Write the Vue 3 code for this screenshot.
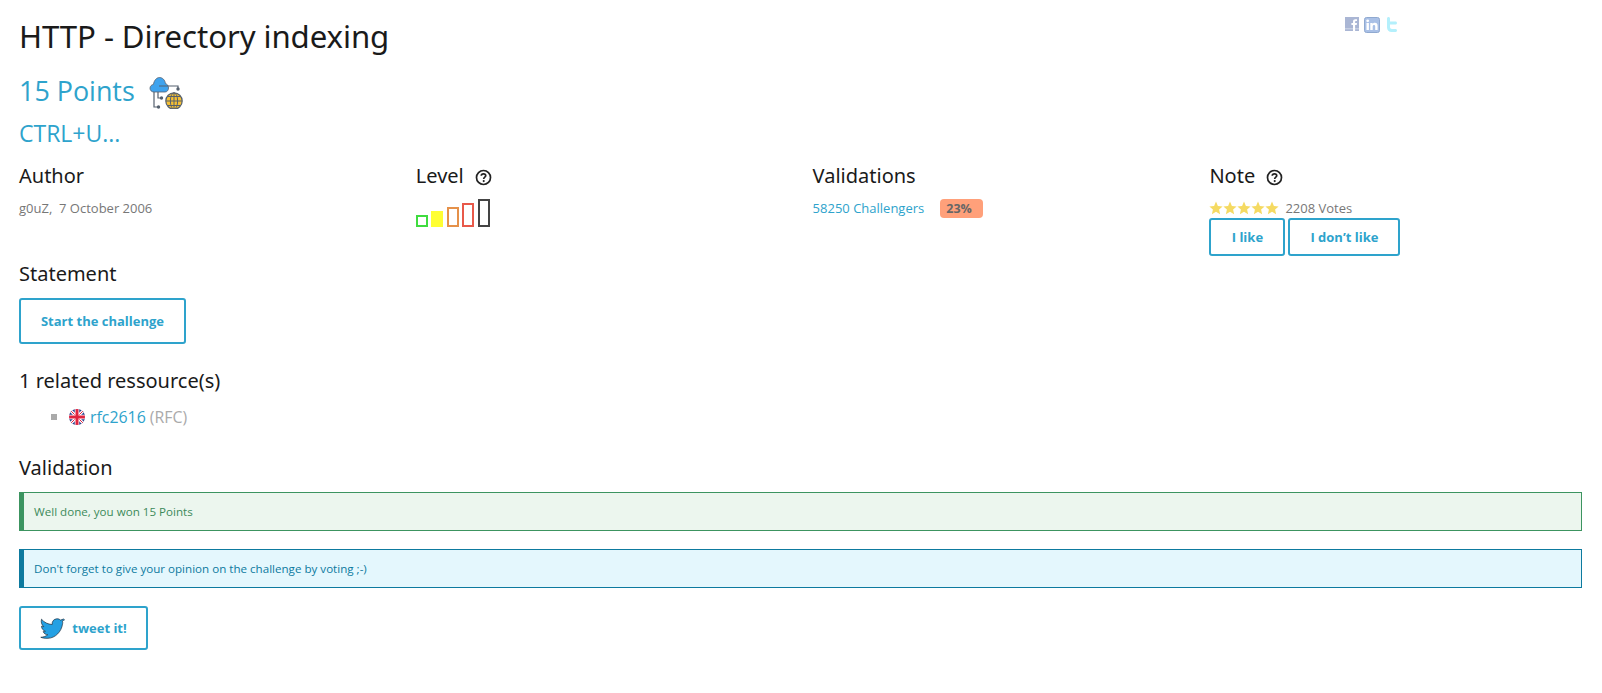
<script setup>
const columns = ['Author', 'Level', 'Validations', 'Note']
const bars = [
  { h: 12, c: '#3fdc3f', fill: false },
  { h: 16, c: '#ffff33', fill: true },
  { h: 20, c: '#e5914a', fill: false },
  { h: 24, c: '#e8594a', fill: false },
  { h: 28, c: '#444444', fill: false },
]
const stars = [1, 2, 3, 4, 5]
</script>

<template>
  <main class="page">
    <div class="share">
      <svg width="14" height="14" viewBox="0 0 14 14"><rect width="14" height="14" fill="#aab6d4"/><rect y="11" width="14" height="1.4" fill="#c6cfe3"/><path d="M8 14V8H6.4V6H8V4.6C8 3 9 2.2 10.4 2.2H12V4H10.9C10.3 4 10.1 4.3 10.1 4.8V6H12L11.7 8H10.1V14Z" fill="#fff"/></svg>
      <svg width="16" height="16" viewBox="0 0 16 16"><rect x=".5" y=".5" width="15" height="15" rx="2" fill="#a9c0e6" stroke="#8fa9d0"/><rect x="2.5" y="6" width="2.4" height="7" fill="#fff"/><circle cx="3.7" cy="3.8" r="1.4" fill="#fff"/><path d="M6.3 6H8.6V7C9.1 6.3 9.9 5.8 10.9 5.8C12.8 5.8 13.6 7 13.6 9V13H11.2V9.4C11.2 8.4 10.8 7.9 10 7.9C9.2 7.9 8.7 8.5 8.7 9.4V13H6.3Z" fill="#fff"/></svg>
      <svg width="14" height="16" viewBox="0 0 14 16"><path d="M2 1.5C2 .7 2.7 0 3.5 0S5 .7 5 1.5V4.5H10.5C11.4 4.5 12 5.2 12 6S11.4 7.5 10.5 7.5H5V10C5 11.2 5.8 12 7 12H10.5C11.4 12 12 12.7 12 13.5S11.4 15 10.5 15H6.5C3.9 15 2 13.1 2 10.5Z" fill="#b4f0fc"/></svg>
    </div>

    <h1>HTTP - Directory indexing</h1>
    <div class="points">
      <span>15 Points</span>
      <svg class="cat" width="34" height="34" viewBox="0 0 34 34">
        <g fill="none" stroke="#55606e" stroke-width="1.2">
          <path d="M5 16V32H9"/><path d="M9 16V23H12"/><path d="M18 11H29V14"/>
        </g>
        <g fill="#55606e"><circle cx="9.5" cy="32" r="1.7"/><circle cx="12.5" cy="23" r="1.7"/><circle cx="29" cy="14" r="1.7"/></g>
        <path d="M5 17C2.5 17 1 15.2 1 13.2C1 11.2 2.5 9.6 4.5 9.4C5 5.5 7.5 2.5 10.5 2.5C13.5 2.5 16 5 16.5 8.7C18.3 9 19.5 10.700 19.5 13C19.5 15.300 18 17 16 17Z" fill="#3fa3ee" stroke="#55606e" stroke-width=".8"/>
        <path d="M10 11H19" stroke="#55606e" stroke-width="1"/>
        <circle cx="25" cy="26" r="8.2" fill="#f6c033" stroke="#55606e" stroke-width="1.2"/>
        <g fill="none" stroke="#55606e" stroke-width="1"><ellipse cx="25" cy="26" rx="3.6" ry="8.2"/><path d="M17 26H33M25 18V34M18.500 21.500H31.500M18.500 30.500H31.500"/></g>
      </svg>
    </div>
    <h2 class="desc">CTRL+U...</h2>

    <section class="grid">
      <div v-for="name in columns" :key="name" class="col">
        <h3>
          {{ name }}
          <svg v-if="name === 'Level' || name === 'Note'" class="help" width="17" height="17" viewBox="0 0 16 16">
            <circle cx="8" cy="8" r="6.6" fill="none" stroke="#222" stroke-width="1.6"/>
            <path d="M5.9 6.4C5.9 5.2 6.8 4.5 8 4.5C9.2 4.5 10.1 5.2 10.1 6.3C10.1 7.7 8.2 7.7 8.2 9.3" fill="none" stroke="#222" stroke-width="1.6"/>
            <circle cx="8.2" cy="11.4" r="1" fill="#222"/>
          </svg>
        </h3>
        <p v-if="name === 'Author'" class="small grey">g0uZ,&nbsp; 7 October 2006</p>
        <div v-else-if="name === 'Level'" class="bars">
          <span v-for="b in bars" :key="b.h" class="bar" :style="{ height: b.h + 'px', borderColor: b.c, background: b.fill ? b.c : 'transparent' }"></span>
        </div>
        <p v-else-if="name === 'Validations'" class="small link-row">
          <a>58250 Challengers</a><span class="badge">23%</span>
        </p>
        <template v-else>
          <p class="small grey votes">
            <span class="stars">
              <svg v-for="s in stars" :key="s" width="14" height="14" viewBox="0 0 14 14"><path d="M7 .6L8.9 4.9L13.6 5.400L10.100 8.500L11.100 13.200L7 10.800L2.900 13.200L3.900 8.500L.4 5.400L5.100 4.900Z" fill="#f5da62"/></svg>
            </span>2208 Votes
          </p>
          <div class="votebtns">
            <button class="btn vote like">I like</button>
            <button class="btn vote dislike">I don’t like</button>
          </div>
        </template>
      </div>
    </section>

    <h3 class="statement">Statement</h3>
    <button class="btn start">Start the challenge</button>

    <h3 class="related">1 related ressource(s)</h3>
    <ul>
      <li>
        <svg class="flag" width="16" height="16" viewBox="0 0 16 16">
          <defs><clipPath id="round"><circle cx="8" cy="8" r="8"/></clipPath></defs>
          <g clip-path="url(#round)">
            <rect width="16" height="16" fill="#2c3f8c"/>
            <path d="M0 0L16 16M16 0L0 16" stroke="#fff" stroke-width="3"/>
            <path d="M0 0L16 16M16 0L0 16" stroke="#e0233e" stroke-width="1"/>
            <path d="M8 0V16M0 8H16" stroke="#fff" stroke-width="4.5"/>
            <path d="M8 0V16M0 8H16" stroke="#e0233e" stroke-width="3"/>
          </g>
        </svg>
        <a>rfc2616</a> <span class="rfc">(RFC)</span>
      </li>
    </ul>

    <h3 class="validation">Validation</h3>
    <div class="alert success">Well done, you won 15 Points</div>
    <div class="alert info">Don't forget to give your opinion on the challenge by voting ;-)</div>
    <button class="btn tweet">
      <svg width="25" height="21" viewBox="0 0 25 21">
        <path d="M24.5 1.8C23.8 2.3 23 2.8 22.2 3.1C22.9 4 22.8 5 22.5 6.1C21.5 13.5 15.5 20 8 20.3C5 20.5 2.5 20 .8 19.3C3.5 19.1 6 18.3 7.8 16.7C5.5 16.6 4 15.7 3.2 13.6C4 13.7 4.8 13.6 5.4 13.3C3 12.4 1.6 10.6 1.5 8.2C2.2 8.5 3 8.7 3.8 8.7C1.5 6.7 .8 4 1.5 1.2C4.2 4.4 7.8 6.3 12.2 6.5C11.8 3.5 13.8 1 16.8 .8C18.2 .7 19.5 1.2 20.5 2.1C21.5 1.8 22.5 1.5 23.4 1Z" fill="#24a0e3" stroke="#1c2b3a" stroke-width=".7"/>
      </svg>
      <span>tweet it!</span>
    </button>
  </main>
</template>

<style scoped>
.page {
  position: relative;
  padding: 18px 19px 0;
  font-family: "Open Sans", "Noto Sans", sans-serif;
  color: #777;
}
.share {
  position: absolute;
  left: 1345px;
  top: 17px;
  display: flex;
  align-items: flex-start;
  gap: 5px;
}
h1, h3 {
  font-family: "Noto Sans", "Open Sans", sans-serif;
  font-weight: 400;
  color: #1a1a1a;
  margin: 0;
}
h1 {
  font-size: 31.2px;
  line-height: 37px;
  letter-spacing: -0.1px;
}
.points {
  margin-top: 18px;
  display: flex;
  align-items: center;
  gap: 14px;
  color: #2ea3cc;
  font-size: 26.9px;
  height: 34px;
}
.cat { margin-top: 4px; }
.desc {
  margin: 10px 0 0;
  font-size: 23px;
  font-weight: 400;
  line-height: 32px;
  color: #2ea3cc;
}
.grid {
  margin-top: 13px;
  display: grid;
  grid-template-columns: repeat(4, 396.8px);
  height: 98px;
}
h3 {
  font-size: 20px;
  line-height: 28px;
}
.help {
  margin-left: 6px;
  vertical-align: -3px;
}
.small {
  font-size: 13px;
  line-height: 18px;
  margin: 0;
}
.grey { color: #777; }
.col > .small { margin-top: 9px; }
.bars {
  display: flex;
  align-items: flex-end;
  gap: 3.5px;
  margin-top: 7px;
  height: 30px;
}
.bar {
  width: 12px;
  box-sizing: border-box;
  border: 2.4px solid;
  display: block;
}
.link-row a { color: #2ea3cc; }
.badge {
  display: inline-block;
  margin-left: 16px;
  padding-left: 6px;
  width: 43px;
  box-sizing: border-box;
  height: 19px;
  line-height: 19px;
  background: #ffa07a;
  border-radius: 4px;
  color: #666;
  font-weight: 700;
  font-size: 12.5px;
}
.col > .votes {
  margin-top: 9px;
  display: flex;
  align-items: center;
  height: 18px;
}
.stars {
  display: flex;
  width: 70px;
  margin-right: 6px;
}
.votebtns {
  display: flex;
  gap: 3px;
  margin-top: 1px;
}
.btn {
  font-family: "Open Sans", "Noto Sans", sans-serif;
  font-weight: 700;
  font-size: 13px;
  color: #2ea3cc;
  background: #fff;
  border: 2px solid #2ea3cc;
  border-radius: 3px;
  padding: 0;
  box-sizing: border-box;
  display: flex;
  align-items: center;
  justify-content: center;
}
.vote { height: 38px; }
.like { width: 76px; }
.dislike { width: 112px; }
.start {
  margin-top: 10px;
  width: 167px;
  height: 46px;
}
.related { margin-top: 23px; }
ul {
  list-style: none;
  margin: 12px 0 0;
  padding: 0 0 0 32px;
  font-size: 15.9px;
  line-height: 20px;
  color: #aaa;
}
li {
  position: relative;
  padding-left: 18px;
  display: flex;
  align-items: center;
  gap: 4px;
}
li::before {
  content: "";
  position: absolute;
  left: 0;
  top: 7px;
  width: 6px;
  height: 6px;
  background: #aaa;
}
li a { color: #2ea3cc; }
.flag { flex: none; margin-right: 1px; }
.validation { margin-top: 27px; }
.alert {
  box-sizing: border-box;
  width: 1563px;
  height: 39px;
  margin-top: 10px;
  border: 1px solid;
  border-left-width: 5px;
  padding-left: 10px;
  font-size: 11.6px;
  display: flex;
  align-items: center;
}
.success {
  margin-top: 10px;
  background: #ecf6ee;
  border-color: #3c9460;
  color: #3c8a5a;
}
.info {
  margin-top: 18px;
  background: #e4f7fd;
  border-color: #0d7a9f;
  color: #0d7a9f;
}
.tweet {
  margin-top: 18px;
  width: 129px;
  height: 44px;
  gap: 7px;
}
</style>

<style>
html, body { background: #fff; }
</style>
